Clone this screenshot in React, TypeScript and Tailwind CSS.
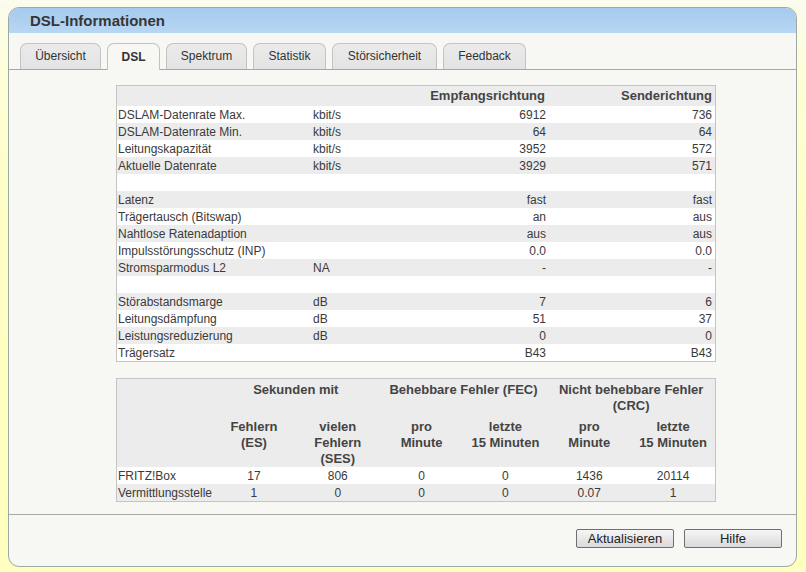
import React from "react";

const font = { fontFamily: '"Liberation Sans", Arial, sans-serif' };

type Row = { label: string; unit: string; rx: string; tx: string } | null;

const rows: Row[] = [
  { label: "DSLAM-Datenrate Max.", unit: "kbit/s", rx: "6912", tx: "736" },
  { label: "DSLAM-Datenrate Min.", unit: "kbit/s", rx: "64", tx: "64" },
  { label: "Leitungskapazität", unit: "kbit/s", rx: "3952", tx: "572" },
  { label: "Aktuelle Datenrate", unit: "kbit/s", rx: "3929", tx: "571" },
  null,
  { label: "Latenz", unit: "", rx: "fast", tx: "fast" },
  { label: "Trägertausch (Bitswap)", unit: "", rx: "an", tx: "aus" },
  { label: "Nahtlose Ratenadaption", unit: "", rx: "aus", tx: "aus" },
  { label: "Impulsstörungsschutz (INP)", unit: "", rx: "0.0", tx: "0.0" },
  { label: "Stromsparmodus L2", unit: "NA", rx: "-", tx: "-" },
  null,
  { label: "Störabstandsmarge", unit: "dB", rx: "7", tx: "6" },
  { label: "Leitungsdämpfung", unit: "dB", rx: "51", tx: "37" },
  { label: "Leistungsreduzierung", unit: "dB", rx: "0", tx: "0" },
  { label: "Trägersatz", unit: "", rx: "B43", tx: "B43" },
];

const tabs = [
  { name: "Übersicht", w: "w-[81px]" },
  { name: "DSL", w: "w-[53px]", active: true },
  { name: "Spektrum", w: "w-[81px]" },
  { name: "Statistik", w: "w-[73px]" },
  { name: "Störsicherheit", w: "w-[105px]" },
  { name: "Feedback", w: "w-[83px]" },
];

export default function App() {
  return (
    <div
      className="w-[806px] h-[572px] overflow-hidden bg-[linear-gradient(to_bottom,#fbfbef_0%,#fefed8_12%,#ffffc4_40%,#ffffc0_100%)] pt-[7px] pl-[8px]"
      style={font}
    >
      <div className="w-[789px] h-[560px] border border-[#9ca8a2] rounded-[11px] bg-[#f7f7f3] overflow-hidden flex flex-col">
        {/* Title */}
        <div className="h-[25px] shrink-0 bg-[linear-gradient(to_bottom,#a5caee,#b7d7f3)] pl-[21px] flex items-center">
          <span className="text-[15px] font-bold text-[#363636] leading-none">DSL-Informationen</span>
        </div>
        {/* Tabs */}
        <div className="h-[37px] shrink-0 border-b border-[#a4a9a6] pt-[10px] pl-[11px] flex gap-[6px]">
          {tabs.map((t) => (
            <div
              key={t.name}
              className={
                t.active
                  ? `${t.w} h-[27px] -mb-px rounded-t-[7px] border border-b-0 border-[#bfc2c0] bg-[#f7f7f3] flex items-center justify-center pb-[1px] text-[12px] font-bold text-[#333]`
                  : `${t.w} h-[26px] rounded-t-[7px] border border-b-0 border-[#c3c3c3] bg-[linear-gradient(to_bottom,#ebebeb,#e3e3e3)] flex items-center justify-center pb-[1px] text-[12px] text-[#333]`
              }
            >
              {t.name}
            </div>
          ))}
        </div>
        {/* Content */}
        <div className="h-[444px] shrink-0 pt-[15px] pl-[107px]">
          {/* Table 1 */}
          <div className="w-[600px] border border-[#c4c4c4] text-[#3a3a3a]">
            <div className="h-[20px] grid grid-cols-[195px_236px_1fr] bg-[#ececec] text-[13px] font-bold text-[#444] items-center">
              <div />
              <div className="text-right pr-[3px] whitespace-nowrap">Empfangsrichtung</div>
              <div className="text-right pr-[3px]">Senderichtung</div>
            </div>
            {rows.map((r, i) => (
              <div
                key={i}
                className={`h-[17px] grid grid-cols-[195px_151px_85px_1fr] items-center text-[12px] leading-[17px] pt-[1px] ${
                  i % 2 === 0 ? "bg-white" : "bg-[#ececec]"
                }`}
              >
                <div className="pl-[1px] whitespace-nowrap">{r ? r.label : ""}</div>
                <div className="pl-[1px]">{r ? r.unit : ""}</div>
                <div className="text-right pr-[2px]">{r ? r.rx : ""}</div>
                <div className="text-right pr-[3px]">{r ? r.tx : ""}</div>
              </div>
            ))}
          </div>
          {/* Table 2 */}
          <div className="mt-[16px] w-[600px] border border-[#c4c4c4] text-[#3a3a3a]">
            <div className="bg-[#ececec] text-[13px] font-bold text-[#444] leading-[16px]">
              <div className="h-[37px] pt-[3px] grid grid-cols-[95px_repeat(6,1fr)] text-center">
                <div />
                <div className="col-span-2">Sekunden mit</div>
                <div className="col-span-2 whitespace-nowrap">Behebbare Fehler (FEC)</div>
                <div className="col-span-2 px-[4px]">Nicht behebbare Fehler (CRC)</div>
              </div>
              <div className="h-[51px] grid grid-cols-[95px_repeat(6,1fr)] text-center items-end">
                <div />
                <div>
                  Fehlern
                  <br />
                  (ES)
                  <br />
                  &nbsp;
                </div>
                <div>
                  vielen
                  <br />
                  Fehlern
                  <br />
                  (SES)
                </div>
                <div>
                  pro
                  <br />
                  Minute
                  <br />
                  &nbsp;
                </div>
                <div>
                  letzte
                  <br />
                  15 Minuten
                  <br />
                  &nbsp;
                </div>
                <div>
                  pro
                  <br />
                  Minute
                  <br />
                  &nbsp;
                </div>
                <div>
                  letzte
                  <br />
                  15 Minuten
                  <br />
                  &nbsp;
                </div>
              </div>
            </div>
            {[
              ["FRITZ!Box", "17", "806", "0", "0", "1436", "20114"],
              ["Vermittlungsstelle", "1", "0", "0", "0", "0.07", "1"],
            ].map((r, i) => (
              <div
                key={i}
                className={`h-[17px] grid grid-cols-[95px_repeat(6,1fr)] items-center text-[12px] leading-[17px] pt-[1px] ${
                  i === 0 ? "bg-white" : "bg-[#ececec]"
                }`}
              >
                {r.map((c, j) => (
                  <div key={j} className={j === 0 ? "pl-[1px] whitespace-nowrap" : "text-center"}>
                    {c}
                  </div>
                ))}
              </div>
            ))}
          </div>
        </div>
        {/* Footer */}
        <div className="border-t border-[#a4aaa6] flex-1 flex justify-end items-start pt-[14px] pr-[14px] gap-[10px]">
          <button className="w-[98px] h-[19px] border border-[#6f6f6f] rounded-[2px] bg-[linear-gradient(to_bottom,#f6f6f6,#d9d9d9)] text-[13px] leading-none text-[#222] flex items-center justify-center">
            Aktualisieren
          </button>
          <button className="w-[98px] h-[19px] border border-[#6f6f6f] rounded-[2px] bg-[linear-gradient(to_bottom,#f6f6f6,#d9d9d9)] text-[13px] leading-none text-[#222] flex items-center justify-center">
            Hilfe
          </button>
        </div>
      </div>
    </div>
  );
}
